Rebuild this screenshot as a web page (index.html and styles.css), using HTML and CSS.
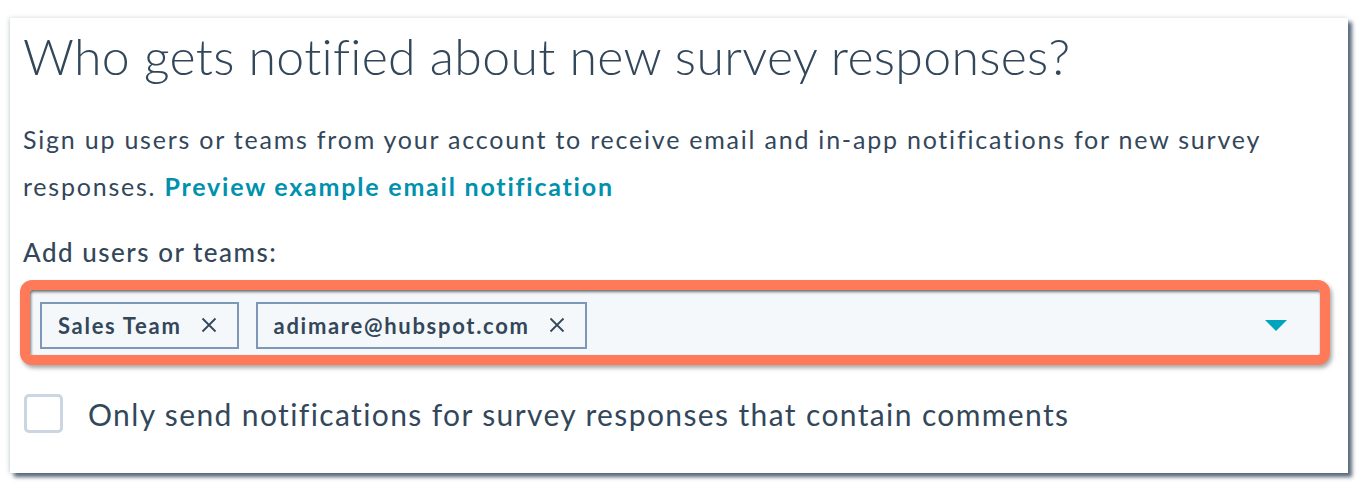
FILE: index.html
```html
<!DOCTYPE html>
<html>
<head>
<meta charset="utf-8">
<link rel="stylesheet" href="styles.css">
</head>
<body>
<div class="card">
  <h1 class="title">Who gets notified about new survey responses?</h1>
  <p class="desc">Sign up users or teams from your account to receive email and in-app notifications for new survey responses. <a class="link" href="#">Preview example email notification</a></p>
  <div class="label">Add users or teams:</div>
  <div class="highlight">
    <div class="select">
      <div class="tags">
        <span class="tag">Sales Team <svg class="x" viewBox="0 0 16 16"><path d="M1.5 1.5 L14.5 14.5 M14.5 1.5 L1.5 14.5"/></svg></span>
        <span class="tag">adimare@hubspot.com <svg class="x" viewBox="0 0 16 16"><path d="M1.5 1.5 L14.5 14.5 M14.5 1.5 L1.5 14.5"/></svg></span>
      </div>
      <svg class="caret" viewBox="0 0 22 11"><path d="M0 0 H22 L11 11 Z"/></svg>
    </div>
  </div>
  <label class="check">
    <span class="box"></span>
    <span class="check-text">Only send notifications for survey responses that contain comments</span>
  </label>
</div>
</body>
</html>
```

FILE: styles.css
```css
html, body {
  margin: 0;
  padding: 0;
  background: #ffffff;
}
body {
  font-family: Lato, "Open Sans", sans-serif;
  color: #33475b;
  padding-top: 18px;
  padding-bottom: 12px;
  min-height: 486px;
  box-sizing: border-box;
}
.card {
  margin: 0 0 0 10px;
  width: 1338px;
  height: 455px;
  box-sizing: border-box;
  background: #ffffff;
  box-shadow: 4px 4px 4px rgba(88, 104, 122, 1), -1px 0 4px rgba(120, 135, 150, 0.35);
  padding: 8px 0 0 13px;
  display: flex;
  flex-direction: column;
}
.title {
  margin: 0;
  font-weight: 300;
  font-size: 50px;
  line-height: 60px;
  letter-spacing: 0.3px;
  color: #33475b;
}
.desc {
  margin: 30px 0 0 0;
  font-size: 25px;
  line-height: 47px;
  letter-spacing: 1.78px;
  width: 1300px;
}
.link {
  color: #0091ae;
  font-weight: 700;
  text-decoration: none;
}
.label {
  margin-top: 26px;
  font-size: 26px;
  font-weight: 500;
  line-height: 32px;
  letter-spacing: 1.5px;
}
.highlight {
  margin: 12px 0 0 -3px;
  width: 1310px;
  height: 85px;
  flex: none;
  box-sizing: border-box;
  border: 10px solid #ff7a59;
  border-radius: 12px;
  box-shadow: 2px 3px 4px rgba(0, 0, 0, 0.35), inset 1px 2px 3px rgba(0, 0, 0, 0.55);
  background: #f5f8fa;
  display: flex;
}
.select {
  flex: 1;
  display: flex;
  align-items: center;
  justify-content: space-between;
  padding: 5px 33px 0 10px;
}
.tags {
  display: flex;
  gap: 17px;
}
.tag {
  display: inline-flex;
  align-items: center;
  height: 47px;
  box-sizing: border-box;
  border: 2px solid #7c98b6;
  padding: 0 20px 0 16px;
  font-size: 22px;
  font-weight: 700;
  letter-spacing: 1.7px;
  gap: 19px;
  background: #f5f8fa;
}
.x {
  width: 16px;
  height: 16px;
  stroke: #33475b;
  stroke-width: 1.8;
  fill: none;
}
.caret {
  width: 22px;
  height: 11px;
  fill: #00a4bd;
}
.check {
  display: flex;
  align-items: center;
  margin-top: 29px;
  margin-left: 1px;
}
.box {
  width: 39px;
  height: 39px;
  box-sizing: border-box;
  border: 3px solid #cbd6e2;
  border-radius: 5px;
  background: #ffffff;
}
.check-text {
  margin-left: 25px;
  font-size: 30px;
  letter-spacing: 1.38px;
}
```
